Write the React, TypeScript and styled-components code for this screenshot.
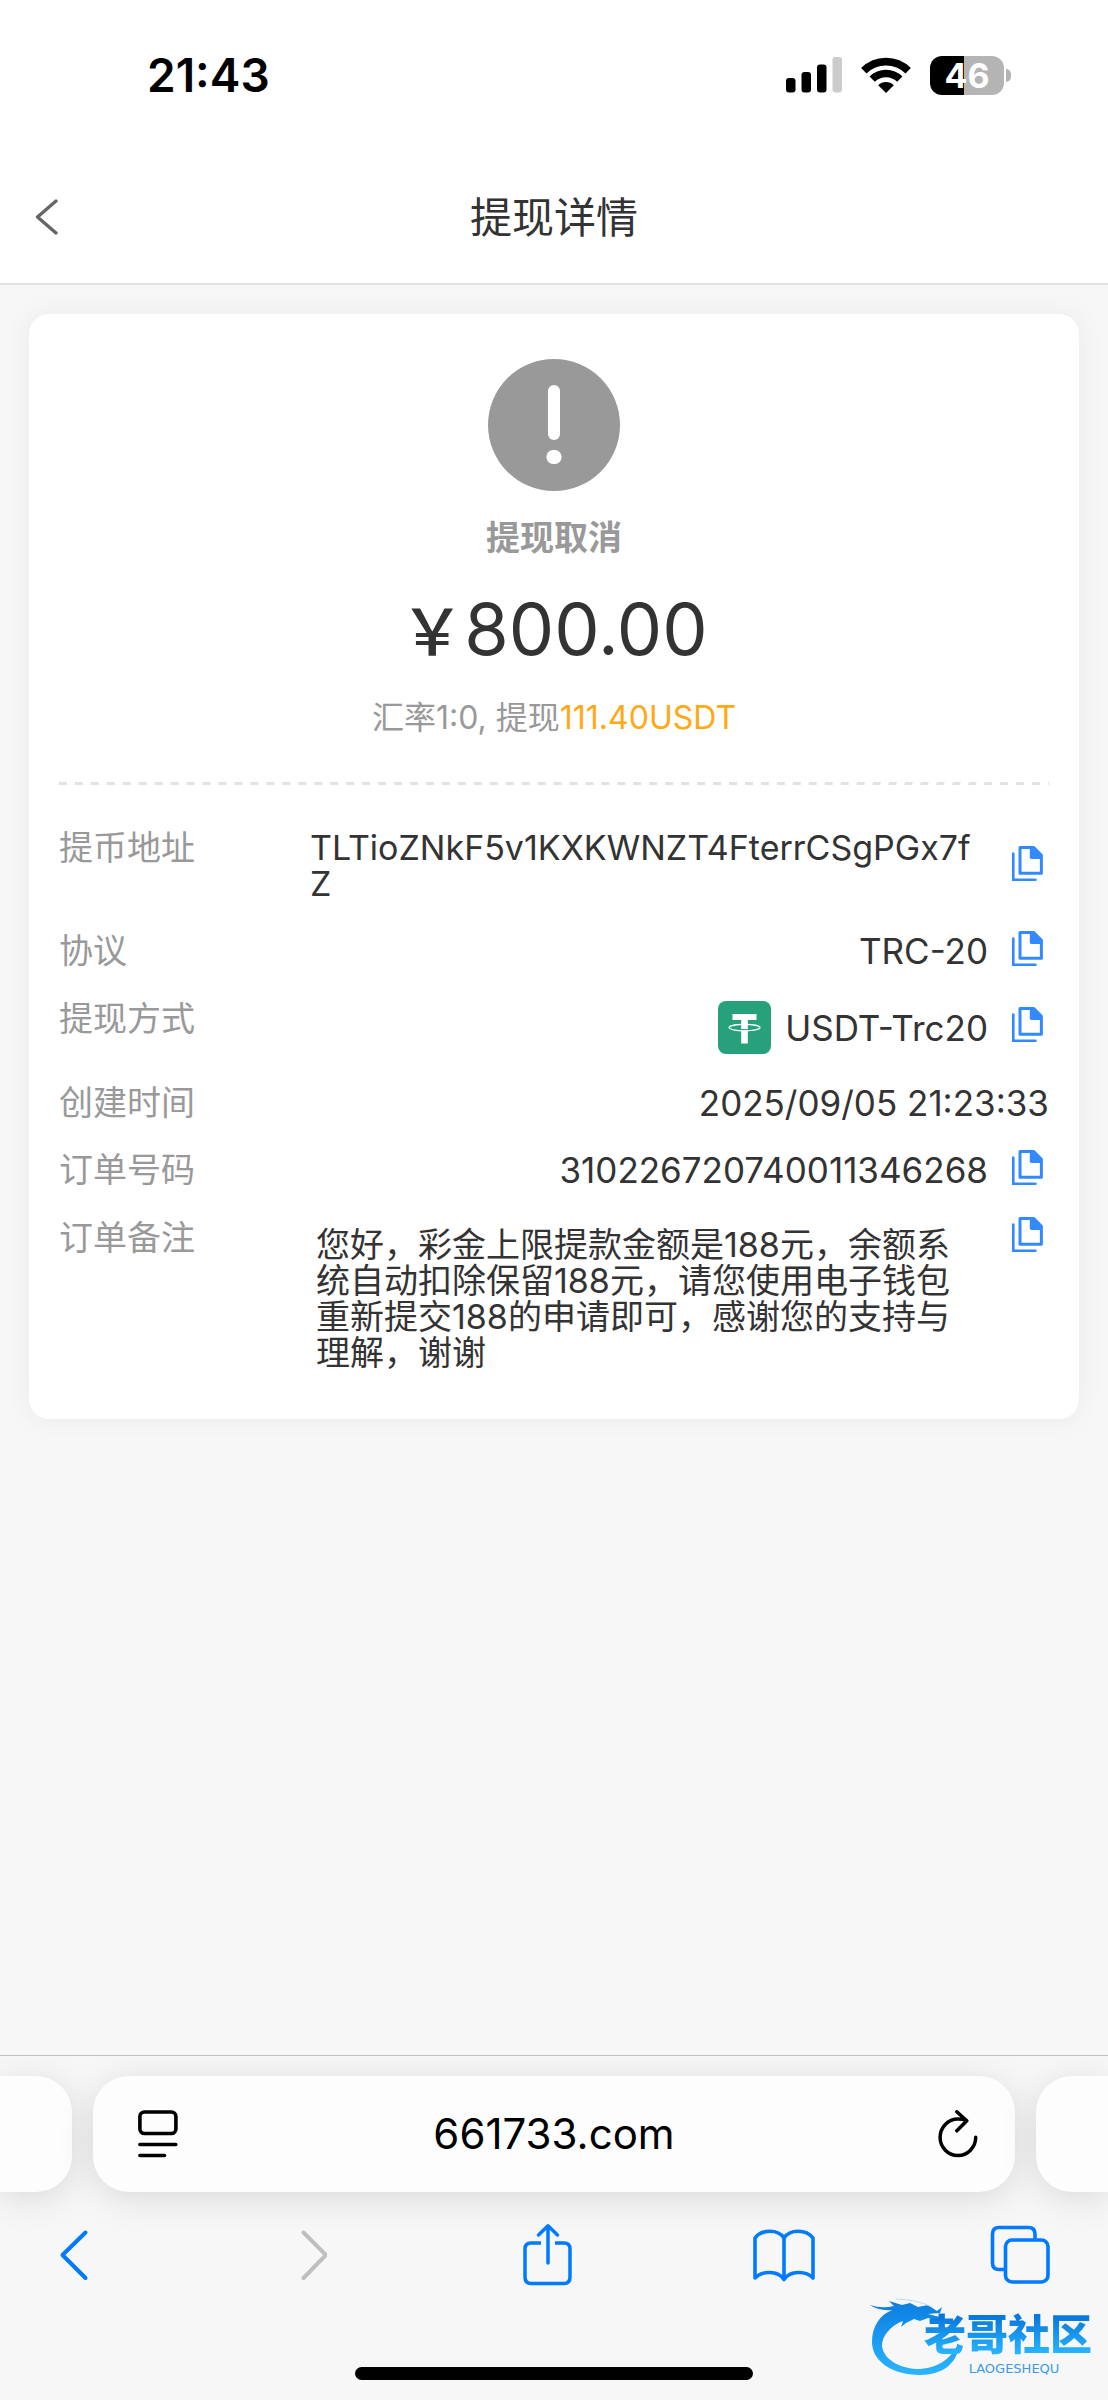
import React from "react";
import styled, { createGlobalStyle } from "styled-components";

const GlobalStyle = createGlobalStyle`
  * { box-sizing: border-box; }
  body { margin: 0; background: #f7f7f7; }
  button { border: 0; padding: 0; background: none; cursor: pointer; color: inherit; font: inherit; }
  h1, p, dl, dt, dd { margin: 0; font-weight: 400; }
  svg { display: block; flex: none; }
`;

const Screen = styled.div`
  position: relative;
  min-height: 100vh;
  display: flex;
  flex-direction: column;
  overflow: hidden;
  color: #333;
  font-family: Inter, "Noto Sans CJK SC", sans-serif;
`;

const Top = styled.header`
  background: #fff;
  border-bottom: 2px solid #e3e3e3;
`;

const StatusBar = styled.div`
  height: 150px;
  padding: 0 97px 0 147px;
  display: flex;
  align-items: center;
  justify-content: space-between;
  color: #000;
`;

const Clock = styled.time`
  font-size: 46px;
  line-height: 56px;
  font-weight: 600;
`;

const Indicators = styled.div`
  display: flex;
  align-items: center;
  gap: 19px;
`;

const Battery = styled.div`
  display: flex;
  align-items: center;
  gap: 2px;
`;

const BatteryBody = styled.div<{ $level: number }>`
  width: 74px;
  height: 39px;
  border-radius: 12px;
  display: grid;
  place-items: center;
  color: #fff;
  font-size: 34px;
  line-height: 39px;
  font-weight: 700;
  background: linear-gradient(90deg, #000 ${(p) => p.$level}%, #b4b4b4 ${(p) => p.$level}%);
`;

const BatteryCap = styled.div`
  width: 5px;
  height: 13px;
  border-radius: 0 5px 5px 0;
  background: #b4b4b4;
`;

const TitleBar = styled.div`
  height: 133px;
  padding: 0 34px;
  display: grid;
  grid-template-columns: 60px 1fr 60px;
  align-items: center;
`;

const Title = styled.h1`
  padding-top: 2px;
  font-size: 42px;
  line-height: 60px;
  text-align: center;
`;

const Main = styled.main`
  flex: 1;
  padding: 29px;
`;

const Card = styled.section`
  padding: 45px 30px 48px;
  border-radius: 20px;
  background: #fff;
  box-shadow: 0 0 28px rgba(0, 0, 0, 0.06);
`;

const Summary = styled.div`
  display: flex;
  flex-direction: column;
  align-items: center;
`;

const State = styled.p`
  margin-top: 27px;
  font-size: 34px;
  line-height: 40px;
  font-weight: 700;
  color: #999;
`;

const Amount = styled.p`
  margin-top: 29px;
  font-size: 72px;
  line-height: 80px;
`;

const Currency = styled.span`
  font-family: "Noto Sans CJK SC", sans-serif;
  font-size: 64px;
  line-height: 80px;
  font-weight: 500;
`;

const Rate = styled.p`
  margin-top: 29px;
  font-size: 32px;
  line-height: 40px;
  color: #999;
`;

const Highlight = styled.span`
  color: #ffa914;
`;

const Divider = styled.div`
  height: 3px;
  margin: 44px 0 45px;
  background: linear-gradient(90deg, #e2e2e2 8px, transparent 8px) 0 0 / 16px 3px round;
`;

const Details = styled.dl`
  font-size: 34px;
  line-height: 36px;
`;

const Row = styled.div<{ $space?: number }>`
  display: flex;
  justify-content: space-between;
  align-items: flex-start;
  margin-top: ${(p) => p.$space ?? 0}px;
`;

const Label = styled.dt`
  flex: 0 0 251px;
  color: #999;
`;

const Value = styled.dd`
  flex: 1;
  display: flex;
  justify-content: flex-end;
  align-items: center;
  font-size: 35px;
`;

const RemarkValue = styled.dd`
  flex: 1;
  display: flex;
  align-items: flex-start;
`;

const Address = styled.span`
  flex: 1;
  font-size: 34px;
  word-break: break-all;
`;

const Remark = styled.span`
  flex: 1;
  padding: 7px 32px 0 6px;
`;

const Method = styled.span`
  display: flex;
  align-items: center;
  gap: 14px;
`;

const CopyButton = styled.button`
  flex: none;
  padding: 0 6px 6px 24px;
  margin: -3px 0;
`;

const Browser = styled.footer`
  border-top: 1px solid #c2c2c2;
  background: #f7f7f7;
  overflow: hidden;
`;

const Tabs = styled.div`
  padding-top: 20px;
  display: flex;
  gap: 21px;
`;

const tabShadow = "0 6px 36px rgba(0, 0, 0, 0.12)";

const NextTab = styled.div<{ $side: "left" | "right" }>`
  flex: 0 0 72px;
  height: 116px;
  background: #fdfdfd;
  box-shadow: ${tabShadow};
  border-radius: ${(p) => (p.$side === "left" ? "0 36px 36px 0" : "36px 0 0 36px")};
`;

const AddressBar = styled.div`
  flex: 1;
  height: 116px;
  padding: 0 37px 0 45px;
  display: flex;
  align-items: center;
  justify-content: space-between;
  border-radius: 36px;
  background: #fdfdfd;
  box-shadow: ${tabShadow};
  color: #000;
`;

const Url = styled.input`
  flex: 1;
  min-width: 0;
  border: 0;
  padding: 0 8px 0 0;
  background: none;
  text-align: center;
  color: #000;
  font-family: Inter, sans-serif;
  font-size: 42px;
  line-height: 52px;
`;

const Toolbar = styled.nav`
  padding: 30px 57px 0 43px;
  display: flex;
  align-items: center;
  justify-content: space-between;
  color: #007aff;
`;

const ToolButton = styled.button`
  width: 62px;
  display: flex;
  justify-content: center;

  &:disabled { color: #bfbfbf; }
`;

const HomeBar = styled.div`
  width: 398px;
  max-width: 60%;
  height: 13px;
  margin: 79px auto 20px;
  border-radius: 7px;
  background: #000;
`;

const Watermark = styled.div`
  position: absolute;
  right: 16px;
  bottom: 24px;
  width: 222px;
  height: 80px;
`;

const WatermarkArt = styled.svg`
  position: absolute;
  inset: 0;
`;

const WatermarkText = styled.div`
  position: absolute;
  right: 0;
  top: 6px;
  display: flex;
  flex-direction: column;
  align-items: center;
`;

const WatermarkName = styled.span`
  font-family: "Noto Sans CJK SC", sans-serif;
  font-weight: 900;
  font-size: 42px;
  line-height: 60px;
  color: transparent;
  background: linear-gradient(#0878dc 25%, #28b4ff 85%);
  background-clip: text;
  -webkit-background-clip: text;
`;

const WatermarkLatin = styled.span`
  padding-left: 12px;
  font-family: "DejaVu Sans", sans-serif;
  font-size: 13px;
  line-height: 14px;
  color: #3a9be8;
`;

const CopyIcon = () => (
  <svg width="31" height="35" viewBox="0 0 31 35" fill="none" aria-hidden="true">
    <path d="M1.3 7.5V33.7H23.5" stroke="#338aff" strokeWidth="2.6" strokeLinecap="round" />
    <path d="M8 1.5H21.8L29.4 9.2V27.3H8Z" stroke="#338aff" strokeWidth="3" strokeLinejoin="round" />
    <path d="M17.8 1H22L30 9.2V13H19.5Q17.8 13 17.8 11.3Z" fill="#338aff" />
  </svg>
);

const TetherIcon = () => (
  <svg width="53" height="53" viewBox="0 0 53 53" fill="none" aria-hidden="true">
    <rect width="53" height="53" rx="8" fill="#26a17b" />
    <path d="M14.5 13H38.5V19H29.8V42.5H23.2V19H14.5Z" fill="#fff" />
    <ellipse cx="26.5" cy="26.6" rx="15.5" ry="3.2" stroke="#fff" strokeWidth="1.2" />
    <path d="M23.2 28.6H29.8" stroke="#26a17b" strokeWidth="1" />
  </svg>
);

const Copy = ({ what }: { what: string }) => (
  <CopyButton type="button" aria-label={`复制${what}`}>
    <CopyIcon />
  </CopyButton>
);

export default function App() {
  return (
    <Screen lang="zh-CN">
      <GlobalStyle />
      <Top>
        <StatusBar>
          <Clock>21:43</Clock>
          <Indicators>
            <svg width="56" height="36" viewBox="0 0 56 36" aria-hidden="true">
              <rect x="0" y="21" width="9.5" height="14.5" rx="3" />
              <rect x="15.5" y="15" width="9.5" height="20.5" rx="3" />
              <rect x="31" y="7.5" width="9.5" height="28" rx="3" />
              <rect x="46.5" y="0" width="9.5" height="35.5" rx="3" fill="#cbcbcb" />
            </svg>
            <svg width="50" height="37" viewBox="0 0 50 37" fill="none" aria-hidden="true">
              <path d="M2.8 13.8A31.5 31.5 0 0 1 47.2 13.8" stroke="#000" strokeWidth="7.6" />
              <path d="M11.2 22.2A19.5 19.5 0 0 1 38.8 22.2" stroke="#000" strokeWidth="7.4" />
              <path d="M25 36L17.2 28.2A11 11 0 0 1 32.8 28.2Z" fill="#000" />
            </svg>
            <Battery>
              <BatteryBody $level={46}>46</BatteryBody>
              <BatteryCap />
            </Battery>
          </Indicators>
        </StatusBar>
        <TitleBar>
          <button type="button" aria-label="返回">
            <svg width="26" height="36" viewBox="0 0 26 36" fill="none" aria-hidden="true">
              <path d="M22 2L3.5 18L22 34" stroke="#666" strokeWidth="3.4" strokeLinecap="round" strokeLinejoin="round" />
            </svg>
          </button>
          <Title>提现详情</Title>
        </TitleBar>
      </Top>

      <Main>
        <Card>
          <Summary>
            <svg width="132" height="132" viewBox="0 0 132 132" aria-hidden="true">
              <circle cx="66" cy="66" r="66" fill="#999" />
              <rect x="60" y="26" width="12" height="55" rx="6" fill="#fff" />
              <rect x="58.5" y="91" width="15" height="14" rx="6.5" fill="#fff" />
            </svg>
            <State>提现取消</State>
            <Amount>
              <Currency>￥</Currency>800.00
            </Amount>
            <Rate>
              汇率1:0, 提现<Highlight>111.40USDT</Highlight>
            </Rate>
          </Summary>
          <Divider />
          <Details>
            <Row>
              <Label>提币地址</Label>
              <Value>
                <Address>TLTioZNkF5v1KXKWNZT4FterrCSgPGx7fZ</Address>
                <Copy what="提币地址" />
              </Value>
            </Row>
            <Row $space={31}>
              <Label>协议</Label>
              <Value>
                TRC-20
                <Copy what="协议" />
              </Value>
            </Row>
            <Row $space={32}>
              <Label>提现方式</Label>
              <Value>
                <Method>
                  <TetherIcon />
                  USDT-Trc20
                </Method>
                <Copy what="提现方式" />
              </Value>
            </Row>
            <Row $space={31}>
              <Label>创建时间</Label>
              <Value>2025/09/05 21:23:33</Value>
            </Row>
            <Row $space={31}>
              <Label>订单号码</Label>
              <Value>
                310226720740011346268
                <Copy what="订单号码" />
              </Value>
            </Row>
            <Row $space={32}>
              <Label>订单备注</Label>
              <RemarkValue>
                <Remark>
                  您好，彩金上限提款金额是188元，余额系统自动扣除保留188元，请您使用电子钱包重新提交188的申请即可，感谢您的支持与理解，谢谢
                </Remark>
                <Copy what="订单备注" />
              </RemarkValue>
            </Row>
          </Details>
        </Card>
      </Main>

      <Browser>
        <Tabs>
          <NextTab $side="left" />
          <AddressBar>
            <button type="button" aria-label="页面菜单">
              <svg width="40" height="48" viewBox="0 0 40 48" fill="none" stroke="#000" strokeWidth="3.6" strokeLinecap="round" aria-hidden="true">
                <rect x="1.9" y="2" width="36" height="21.5" rx="4.5" />
                <path d="M1.9 34.5H37.8M1.9 45.5H26.5" />
              </svg>
            </button>
            <Url aria-label="网址" defaultValue="661733.com" />
            <button type="button" aria-label="重新载入">
              <svg width="40" height="48" viewBox="0 0 40 48" fill="none" stroke="#000" strokeWidth="3.5" strokeLinecap="round" strokeLinejoin="round" aria-hidden="true">
                <path d="M37.7 27.3A17.8 18.2 0 1 1 19.9 9.1Q24.5 9 28.3 10.6M18.8 1.8L28.8 10.8L18.8 20.8" />
              </svg>
            </button>
          </AddressBar>
          <NextTab $side="right" />
        </Tabs>
        <Toolbar>
          <ToolButton type="button" aria-label="后退">
            <svg width="32" height="66" viewBox="0 0 32 66" fill="none" stroke="currentColor" strokeWidth="4" strokeLinecap="round" strokeLinejoin="round" aria-hidden="true">
              <path d="M27.5 10.5L4.5 33L27.5 56" />
            </svg>
          </ToolButton>
          <ToolButton type="button" aria-label="前进" disabled>
            <svg width="32" height="66" viewBox="0 0 32 66" fill="none" stroke="currentColor" strokeWidth="4" strokeLinecap="round" strokeLinejoin="round" aria-hidden="true">
              <path d="M8.5 10.5L31 33L8.5 56" />
            </svg>
          </ToolButton>
          <ToolButton type="button" aria-label="分享">
            <svg width="50" height="66" viewBox="0 0 50 66" fill="none" stroke="currentColor" strokeWidth="3.5" strokeLinecap="round" strokeLinejoin="round" aria-hidden="true">
              <path d="M26 41V4M16.5 13L26 3.8L35.5 13" />
              <path d="M19 21H9Q3 21 3 27V55Q3 61.5 9 61.5H42Q48 61.5 48 55V27Q48 21 42 21H33" strokeLinecap="butt" />
            </svg>
          </ToolButton>
          <ToolButton type="button" aria-label="书签">
            <svg width="62" height="66" viewBox="0 0 62 66" fill="none" stroke="currentColor" strokeWidth="3.6" strokeLinecap="round" strokeLinejoin="round" aria-hidden="true">
              <path d="M31 16C25 7 9 7 2 16V56C9 48.5 25 48.5 31 57.5C37 48.5 53 48.5 60 56V16C53 7 37 7 31 16V57" />
            </svg>
          </ToolButton>
          <ToolButton type="button" aria-label="标签页">
            <svg width="60" height="66" viewBox="0 0 60 66" fill="none" stroke="currentColor" strokeWidth="3.6" aria-hidden="true">
              <path d="M15 47.5H9Q2.5 47.5 2.5 41V12Q2.5 5.5 9 5.5H38.5Q45 5.5 45 12V18" />
              <rect x="15.5" y="18" width="42.5" height="42" rx="6.5" />
            </svg>
          </ToolButton>
        </Toolbar>
        <HomeBar />
      </Browser>

      <Watermark>
        <WatermarkArt width="222" height="80" viewBox="0 0 222 80" aria-hidden="true">
          <defs>
            <linearGradient id="dragon" x1="0" y1="0" x2="0" y2="1">
              <stop offset="0" stopColor="#0a7de0" />
              <stop offset="1" stopColor="#2bb5ff" />
            </linearGradient>
          </defs>
          <path
            fill="url(#dragon)"
            d="M0 9Q12 13 24 10L19 5L32 9L40 7L48 11L58 9L67 15L72 11L70 17L58 18L70 21L69 25L58 22L50 25L44 23L36 27L31 31L33 25C20 30 12 40 12 50C14 65 32 73 50 73C66 72 80 64 87 50L89 49C87 68 72 79 50 79C22 79 2 65 2 46C2 30 10 19 22 14Q8 15 0 9Z"
          />
          <path d="M26 3Q45 3 62 11" fill="none" stroke="#b9dcf5" strokeWidth="1" />
        </WatermarkArt>
        <WatermarkText>
          <WatermarkName>老哥社区</WatermarkName>
          <WatermarkLatin>LAOGESHEQU</WatermarkLatin>
        </WatermarkText>
      </Watermark>
    </Screen>
  );
}
